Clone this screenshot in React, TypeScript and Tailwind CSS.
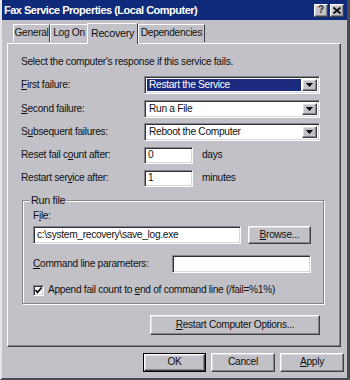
const raised =
  "border border-t-white border-l-white border-r-[#404048] border-b-[#404048] shadow-[inset_-1px_-1px_0_#85848c,inset_1px_1px_0_#dcdbe2]";
const sunken =
  "border border-t-[#85848c] border-l-[#85848c] border-r-white border-b-white shadow-[inset_1px_1px_0_#303038,inset_-1px_-1px_0_#d8d7de]";

function U({ children }: { children: string }) {
  return <span className="underline underline-offset-[1px]">{children}</span>;
}

function Arrow() {
  return (
    <div className={`w-[15px] h-full flex items-center justify-center bg-[#c2c1c8] ${raised}`}>
      <svg width="7" height="4" viewBox="0 0 7 4">
        <path d="M0 0h7L3.5 4z" fill="#000" />
      </svg>
    </div>
  );
}

function Combo({ value, selected }: { value: string; selected?: boolean }) {
  return (
    <div className={`w-[176px] h-[18px] bg-white flex items-stretch p-[2px] ${sunken}`}>
      <div className="flex-1 flex items-center pr-[1px]">
        <span
          className={`h-full w-full flex items-center pl-[2px] ${
            selected ? "bg-[#1b2a7e] text-white" : ""
          }`}
        >
          {value}
        </span>
      </div>
      <Arrow />
    </div>
  );
}

function Label({ children }: { children: React.ReactNode }) {
  return <div className="w-[123px] shrink-0">{children}</div>;
}

function Button({ children, w, h = "h-[19px]" }: { children: React.ReactNode; w: string; h?: string }) {
  return (
    <div className={`${w} ${h} flex items-center justify-center bg-[#c2c1c8] ${raised}`}>
      {children}
    </div>
  );
}

const tab =
  "h-[18px] border border-b-0 border-t-white border-l-white border-r-[#404048] flex items-center justify-center mb-[1px]";

export default function App() {
  return (
    <div className="w-[350px] h-[380px] bg-[#c2c1c8] border-l-2 border-l-[#e6e5ea] border-r-[3px] border-r-[#4a4a52] border-b-2 border-b-[#4a4a52] flex flex-col font-['Liberation_Sans',Arial,sans-serif] text-[10.2px] tracking-[-0.3px] leading-none text-[#111] overflow-hidden whitespace-nowrap">
      {/* title bar */}
      <div className="h-[20px] bg-[#0f2a78] flex items-center justify-between pl-[2px] pr-[3px]">
        <span className="text-white font-bold text-[11px] tracking-[-0.5px]">
          Fax Service Properties (Local Computer)
        </span>
        <div className="flex gap-[2px]">
          <div className={`w-[14px] h-[13px] bg-[#c2c1c8] flex items-center justify-center font-bold text-[10px] text-[#333] ${raised}`}>
            ?
          </div>
          <div className={`w-[14px] h-[13px] bg-[#c2c1c8] flex items-center justify-center ${raised}`}>
            <svg width="8" height="7" viewBox="0 0 8 7">
              <path d="M0.5 0.5l7 6M7.5 0.5l-7 6" stroke="#000" strokeWidth="1.6" />
            </svg>
          </div>
        </div>
      </div>

      {/* tabs */}
      <div className="h-[23px] pl-[11px] flex items-end relative z-10">
        <div className={`w-[37px] ${tab}`}>General</div>
        <div className={`w-[38px] ${tab}`}>Log On</div>
        <div className="w-[51px] h-[21px] border border-b-0 border-t-white border-l-white border-r-[#404048] bg-[#c2c1c8] flex items-start pt-[4px] justify-center -mb-[1px] -ml-[1px] text-[10.8px]">
          Recovery
        </div>
        <div className={`w-[67px] ${tab}`}>Dependencies</div>
      </div>

      {/* panel */}
      <div className="ml-[5px] w-[334px] h-[304px] border border-t-white border-l-white border-r-[#404048] border-b-[#404048] shadow-[inset_-1px_-1px_0_#85848c] pl-[13px] pr-[20px] pt-[13px]">
        <div className="h-[11px] flex items-center">Select the computer's response if this service fails.</div>

        <div className="mt-[8px] flex items-center h-[18px]">
          <Label>
            <U>F</U>irst failure:
          </Label>
          <Combo value="Restart the Service" selected />
        </div>
        <div className="mt-[6px] flex items-center h-[18px]">
          <Label>
            <U>S</U>econd failure:
          </Label>
          <Combo value="Run a File" />
        </div>
        <div className="mt-[5px] flex items-center h-[18px]">
          <Label>
            S<U>u</U>bsequent failures:
          </Label>
          <Combo value="Reboot the Computer" />
        </div>

        <div className="mt-[6px] flex items-center h-[17px]">
          <Label>
            Reset fail c<U>o</U>unt after:
          </Label>
          <div className={`w-[49px] h-[17px] bg-white flex items-center pl-[3px] ${sunken}`}>0</div>
          <span className="ml-[9px]">days</span>
        </div>
        <div className="mt-[6px] flex items-center h-[17px]">
          <Label>
            Restart ser<U>v</U>ice after:
          </Label>
          <div className={`w-[49px] h-[17px] bg-white flex items-center pl-[3px] ${sunken}`}>1</div>
          <span className="ml-[9px]">minutes</span>
        </div>

        {/* group box */}
        <div className="mt-[13px] ml-[1px] w-[302px] h-[104px] border border-[#85848c] shadow-[inset_1px_1px_0_white,1px_1px_0_white] pl-[10px] pr-[12px]">
          <div className="-mt-[6px] ml-[-4px] px-[2px] bg-[#c2c1c8] w-fit h-[11px] flex items-center text-[10.8px]">Run file</div>
          <div className="mt-[5px] h-[11px] flex items-center">
            F<U>i</U>le:
          </div>
          <div className="mt-[4px] flex items-center justify-between">
            <div className={`w-[208px] h-[18px] bg-white flex items-center pl-[3px] ${sunken}`}>
              c:\system_recovery\save_log.exe
            </div>
            <Button w="w-[63px]" h="h-[18px]">
              <span>
                <U>B</U>rowse...
              </span>
            </Button>
          </div>
          <div className="mt-[11px] flex items-center justify-between">
            <span>
              <U>C</U>ommand line parameters:
            </span>
            <div className={`w-[139px] h-[18px] bg-white ${sunken}`} />
          </div>
          <div className="mt-[12px] flex items-center">
            <div className={`w-[11px] h-[11px] bg-white flex items-center justify-center ${sunken}`}>
              <svg width="7" height="7" viewBox="0 0 7 7">
                <path d="M0.5 3l2 2.5L6.5 0.5" stroke="#000" strokeWidth="1.6" fill="none" />
              </svg>
            </div>
            <span className="ml-[4px]">
              Append fail count to <U>e</U>nd of command line (/fail=%1%)
            </span>
          </div>
        </div>

        <div className="mt-[11px] flex justify-end">
          <Button w="w-[170px]" h="h-[20px]">
            <span>
              <U>R</U>estart Computer Options...
            </span>
          </Button>
        </div>
      </div>

      {/* bottom buttons */}
      <div className="mt-[6px] flex justify-end gap-[5px] pr-[3px]">
        <div className="border border-black">
          <Button w="w-[61px]" h="h-[17px]">OK</Button>
        </div>
        <Button w="w-[64px]" h="h-[19px]">Cancel</Button>
        <Button w="w-[64px]" h="h-[19px]">
          <span>
            <U>A</U>pply
          </span>
        </Button>
      </div>
    </div>
  );
}
